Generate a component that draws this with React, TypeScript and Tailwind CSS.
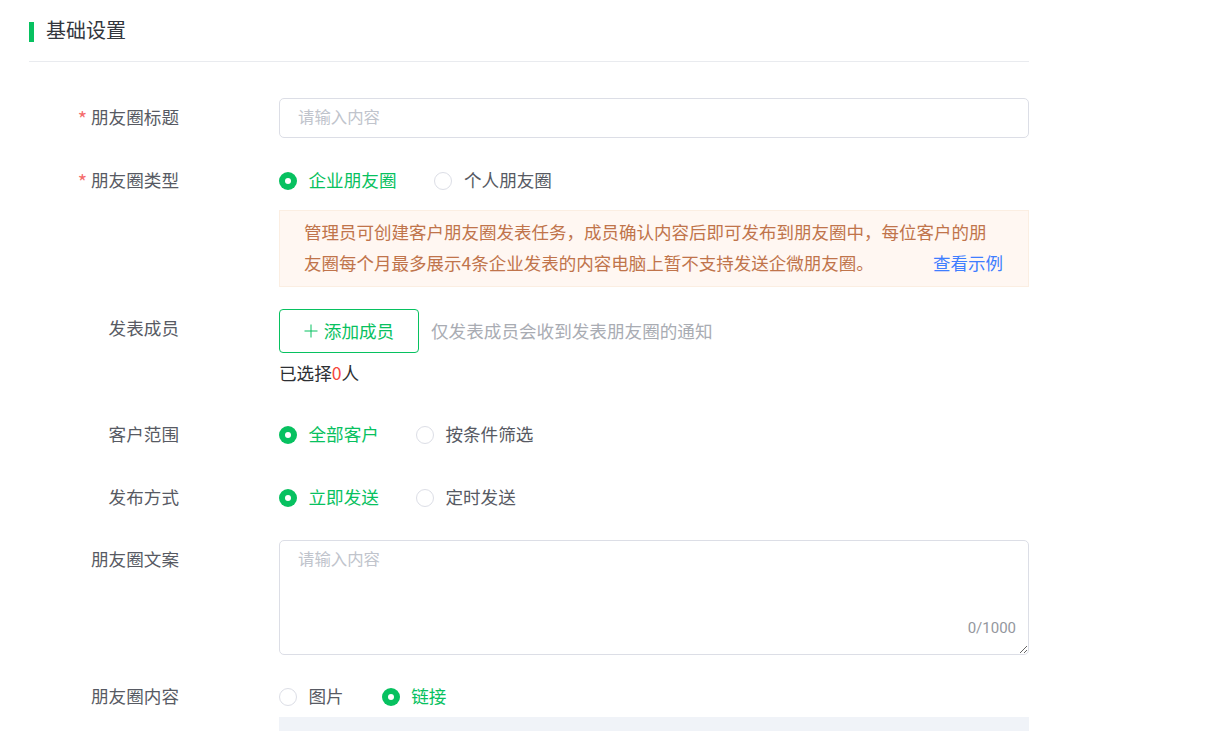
import React from "react";

const font = { fontFamily: '"Noto Sans CJK SC", "Noto Sans", sans-serif' };

function Radio({ label, checked, className = "" }: { label: string; checked?: boolean; className?: string }) {
  return (
    <div className={"flex items-center " + className}>
      {checked ? (
        <span className="w-[18px] h-[18px] rounded-full bg-[#07c160] flex items-center justify-center">
          <span className="w-[6px] h-[6px] rounded-full bg-white" />
        </span>
      ) : (
        <span className="w-[18px] h-[18px] rounded-full border border-[#dcdee6] bg-white" />
      )}
      <span className={"ml-[11.5px] mb-[2px] " + (checked ? "text-[#07c160]" : "text-[#575a63]")}>{label}</span>
    </div>
  );
}

function Row({ label, required, className = "", labelClass = "", children }: { label: string; required?: boolean; className?: string; labelClass?: string; children: React.ReactNode }) {
  return (
    <div className={"flex " + className}>
      <div className={"w-[150px] h-[26px] shrink-0 text-right text-[#575a63] leading-[24px] " + labelClass}>
        {required && <span className="relative top-[3px] text-[#f56c6c] mr-[4px] text-[20px] leading-[20px]">*</span>}
        {label}
      </div>
      <div className="ml-[100px] flex-1 min-w-0">{children}</div>
    </div>
  );
}

export default function App() {
  return (
    <div className="h-[731px] overflow-hidden bg-white text-[17.6px]" style={font}>
      <div className="ml-[29px] w-[1000px]">
        <div className="h-[62px] border-b border-[#e9ebef] pt-[20px] flex items-start">
          <span className="w-[5px] h-[20px] mt-[2px] bg-[#07c160]" />
          <span className="ml-3 text-[20px] leading-[20px] text-[#33363d]">基础设置</span>
        </div>

        <Row label="朋友圈标题" required className="mt-[36px] items-center">
          <input
            readOnly
            placeholder="请输入内容"
            className="w-full h-[40px] border border-[#dcdee6] rounded-[5px] px-[18px] pb-[4px] text-[16.4px] outline-none placeholder:text-[#c0c4cc]"
          />
        </Row>

        <Row label="朋友圈类型" required className="mt-[30px]">
          <div className="flex h-[26px] items-center">
            <Radio label="企业朋友圈" checked />
            <Radio label="个人朋友圈" className="ml-[38px]" />
          </div>
          <div className="mt-[16px] h-[77px] border border-[#fbeee2] bg-[#fff7f2] pl-[24px] pr-[25px] pt-[5px] leading-[31px] text-[17.5px] text-[#c0744b]">
            <div>管理员可创建客户朋友圈发表任务，成员确认内容后即可发布到朋友圈中，每位客户的朋</div>
            <div className="flex justify-between">
              <span>友圈每个月最多展示4条企业发表的内容电脑上暂不支持发送企微朋友圈。</span>
              <span className="text-[#3f7eff]">查看示例</span>
            </div>
          </div>
        </Row>

        <Row label="发表成员" className="mt-[22px]" labelClass="pt-[7px]">
          <div className="flex items-center">
            <div className="w-[140px] h-[44px] border border-[#07c160] rounded-[4px] flex items-center justify-center text-[#07c160]">
              <svg width="14" height="14" viewBox="0 0 14 14" className="mr-[6px]" fill="none" stroke="#07c160" strokeWidth="1">
                <path d="M7 0.5V13.5M0.5 7H13.5" />
              </svg>
              添加成员
            </div>
            <span className="ml-3 text-[#a9acb3]">仅发表成员会收到发表朋友圈的通知</span>
          </div>
          <div className="mt-[7px] leading-[26px] text-[#2d2f33]">
            已选择<span className="text-[#f5483b]">0</span>人
          </div>
        </Row>

        <Row label="客户范围" className="mt-[36px]">
          <div className="flex h-[26px] items-center">
            <Radio label="全部客户" checked />
            <Radio label="按条件筛选" className="ml-[37px]" />
          </div>
        </Row>

        <Row label="发布方式" className="mt-[37px]">
          <div className="flex h-[26px] items-center">
            <Radio label="立即发送" checked />
            <Radio label="定时发送" className="ml-[37px]" />
          </div>
        </Row>

        <Row label="朋友圈文案" className="mt-[29px]" labelClass="pt-[7px]">
          <div className="relative h-[115px]">
            <textarea
              readOnly
              placeholder="请输入内容"
              className="block w-full h-[115px] border border-[#dcdee6] rounded-[5px] px-[18px] pt-[5px] text-[16.4px] outline-none placeholder:text-[#c0c4cc]"
            />
            <span className="absolute right-[13px] bottom-[17px] text-[15px] leading-[20px] text-[#94979e]" style={{ fontFamily: "Roboto, sans-serif" }}>
              0/1000
            </span>
          </div>
        </Row>

        <Row label="朋友圈内容" className="mt-[29px]">
          <div className="flex h-[26px] items-center">
            <Radio label="图片" />
            <Radio label="链接" checked className="ml-[38px]" />
          </div>
          <div className="mt-[7px] h-[200px] bg-[#f0f3f8]" />
        </Row>
      </div>
    </div>
  );
}
